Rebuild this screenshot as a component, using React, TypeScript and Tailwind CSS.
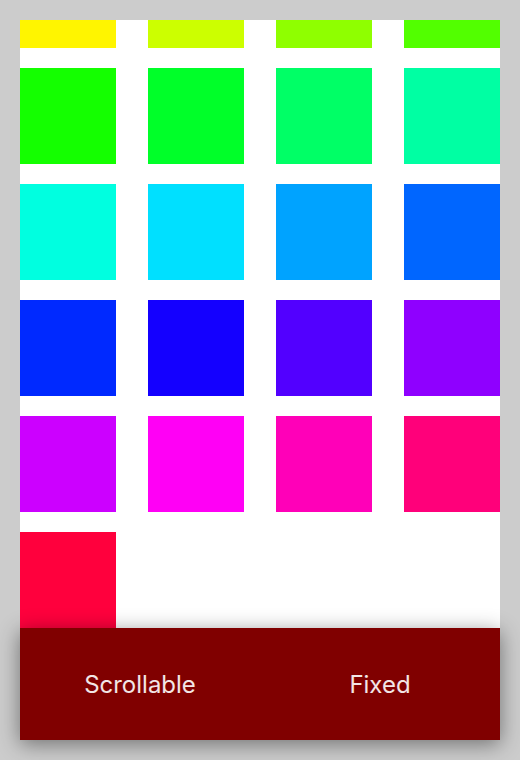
import React from "react";

const hues = Array.from({ length: 21 }, (_, i) => (i + 4) * 14.4);

export default function App() {
  return (
    <div className="w-[520px] h-[760px] bg-[#cccccc] p-5" style={{ fontFamily: "Inter, 'Noto Sans', sans-serif" }}>
      <div className="h-[720px] bg-white flex flex-col">
        <div className="flex-1 overflow-hidden">
          <div className="grid grid-cols-4 gap-x-8 gap-y-5 mt-[-68px]">
            {hues.map((h) => (
              <div key={h} className="h-24" style={{ backgroundColor: `hsl(${h}, 100%, 50%)` }} />
            ))}
          </div>
        </div>
        <div className="relative z-10 h-[112px] shrink-0 bg-[#800000] flex pt-[2px] shadow-[0_4px_20px_rgba(0,0,0,0.45)]">
          <div className="flex-1 flex items-center justify-center text-[24px] text-white/90">Scrollable</div>
          <div className="flex-1 flex items-center justify-center text-[24px] text-white/90">Fixed</div>
        </div>
      </div>
    </div>
  );
}
